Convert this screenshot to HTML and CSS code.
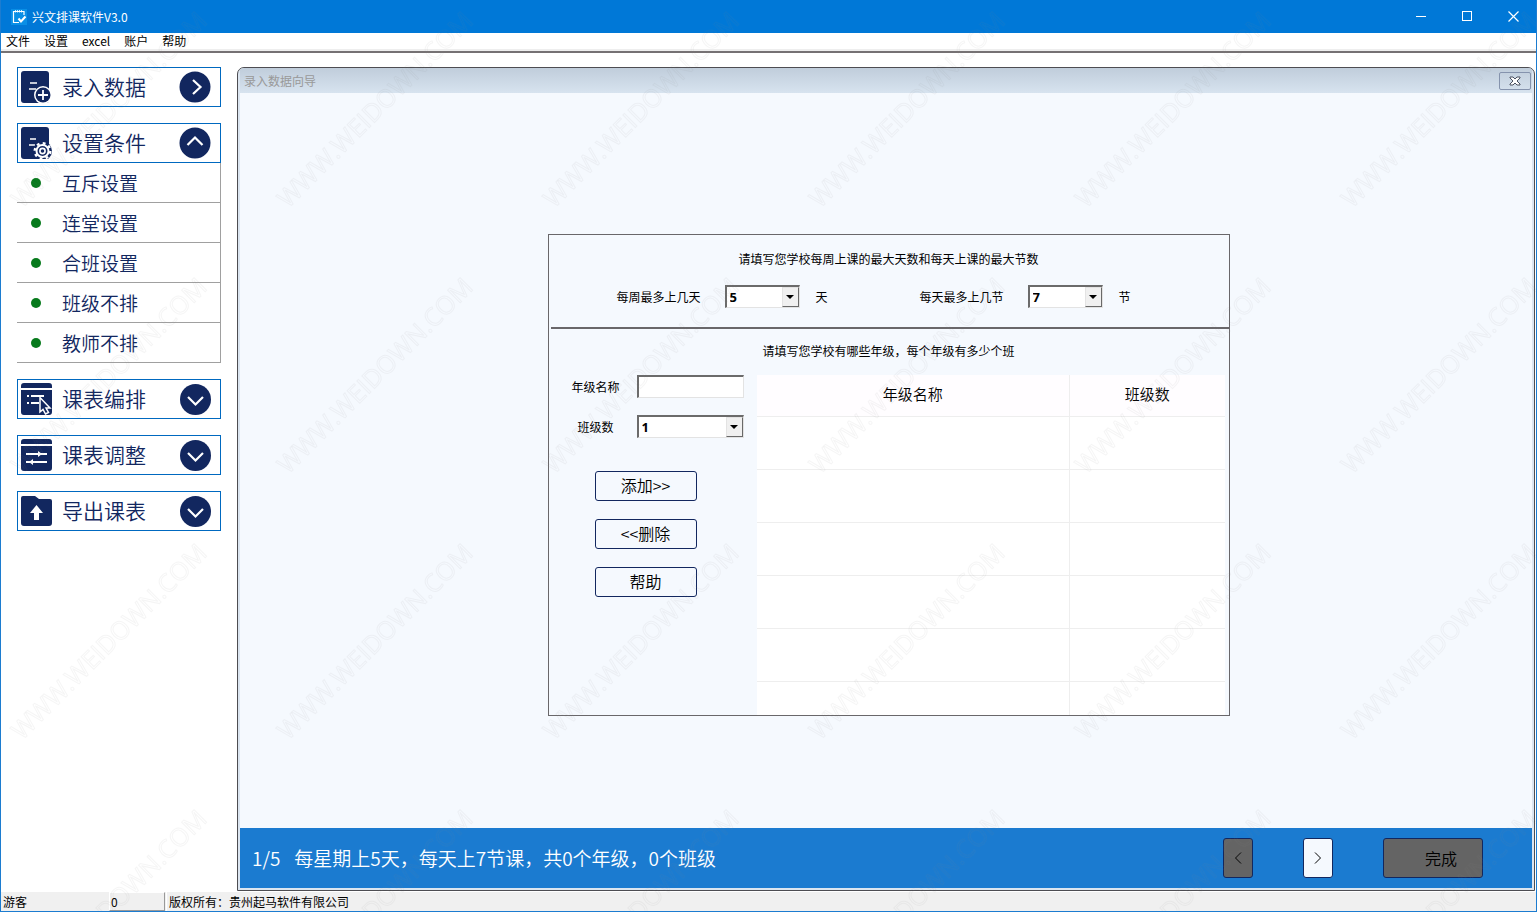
FILE: index.html
```html
<!DOCTYPE html>
<html lang="zh-CN">
<head>
<meta charset="utf-8">
<title>兴文排课软件V3.0</title>
<link rel="stylesheet" href="styles.css">
</head>
<body>
<div class="window">
  <header class="titlebar">
    <svg class="app-icon" viewBox="0 0 16 16" width="16" height="16"><rect width="16" height="16" fill="#0a8fe6"/><path d="M13 6V2.500H2.500v11H8" fill="none" stroke="#fff" stroke-width="1.200"/><path d="M4.500 1v2.500M6.500 1v2.500M8.500 1v2.500M10.500 1v2.500" stroke="#fff" stroke-width=".8"/><path d="M7.500 9.500l2.500 3 4.500-5" fill="none" stroke="#fff" stroke-width="2"/></svg>
    <span class="app-title">兴文排课软件V3.0</span>
    <div class="caption-buttons">
      <button type="button" aria-label="最小化"><svg width="11" height="11"><path d="M0 5.500h10" stroke="#fff"/></svg></button>
      <button type="button" aria-label="最大化"><svg width="11" height="11"><rect x=".5" y=".5" width="9" height="9" fill="none" stroke="#fff"/></svg></button>
      <button type="button" aria-label="关闭"><svg width="11" height="11"><path d="M.5.5l10 10M10.500.5l-10 10" stroke="#fff" stroke-width="1.200"/></svg></button>
    </div>
  </header>
  <nav class="menubar">
    <button type="button">文件</button>
    <button type="button">设置</button>
    <button type="button">excel</button>
    <button type="button">账户</button>
    <button type="button">帮助</button>
  </nav>
  <div class="workspace">
    <aside class="sidebar">
      <button type="button" class="group">
        <svg width="32" height="32" viewBox="0 0 32 32"><rect x="1" width="28" height="32" rx="3" fill="#12275f"/><path d="M10 12h7M9 18h7" stroke="#fff" stroke-width="1.600"/><circle cx="23" cy="24" r="9" fill="#fff"/><circle cx="23" cy="24" r="7.500" fill="#12275f"/><path d="M18 24h10M23 19v10" stroke="#fff" stroke-width="1.800"/></svg>
        <span>录入数据</span>
        <svg class="chevron" width="32" height="32" viewBox="0 0 32 32"><circle cx="16" cy="16" r="15.500" fill="#12275f"/><path d="M14 9l7.500 7-7.500 7" fill="none" stroke="#fff" stroke-width="2.200"/></svg>
      </button>
      <div class="group-block">
        <button type="button" class="group">
          <svg width="32" height="32" viewBox="0 0 32 32"><rect x="1" width="28" height="32" rx="3" fill="#12275f"/><path d="M10 12h6M9 18h6" stroke="#fff" stroke-width="1.600"/><circle cx="22.500" cy="24" r="9.500" fill="#12275f"/><circle cx="22.500" cy="24" r="6" fill="none" stroke="#fff" stroke-width="2"/><circle cx="22.500" cy="24" r="7.800" fill="none" stroke="#fff" stroke-width="2.400" stroke-dasharray="2.800 3.326"/><circle cx="22.500" cy="24" r="2.600" fill="none" stroke="#fff" stroke-width="1.600"/></svg>
          <span>设置条件</span>
          <svg class="chevron" width="32" height="32" viewBox="0 0 32 32"><circle cx="16" cy="16" r="15.500" fill="#12275f"/><path d="M8.500 18l7.500-7.500 7.500 7.500" fill="none" stroke="#fff" stroke-width="2.200"/></svg>
        </button>
        <ul class="sublist">
          <li><a href="#">互斥设置</a></li>
          <li><a href="#">连堂设置</a></li>
          <li><a href="#">合班设置</a></li>
          <li><a href="#">班级不排</a></li>
          <li><a href="#">教师不排</a></li>
        </ul>
      </div>
      <button type="button" class="group">
        <svg width="32" height="32" viewBox="0 0 32 32"><path d="M1 5V3a3 3 0 0 1 3-3h25a3 3 0 0 1 3 3v2zM1 7h31v22a3 3 0 0 1-3 3H4a3 3 0 0 1-3-3z" fill="#12275f"/><path d="M7 13h2M11 13h13M7 20h2M11 20h8" stroke="#fff" stroke-width="1.800"/><path d="M20 14.500v14.500l3-2.500 2.500 4.500 3-1.500-2.500-4.500h4z" fill="#12275f" stroke="#fff" stroke-width="1.500"/></svg>
        <span>课表编排</span>
        <svg class="chevron" width="32" height="32" viewBox="0 0 32 32"><circle cx="16.500" cy="16.500" r="15.500" fill="#12275f"/><path d="M9 14l7.500 7.500 7.500-7.500" fill="none" stroke="#fff" stroke-width="2.200"/></svg>
      </button>
      <button type="button" class="group">
        <svg width="32" height="32" viewBox="0 0 32 32"><path d="M1 5V3a3 3 0 0 1 3-3h25a3 3 0 0 1 3 3v2zM1 7h31v22a3 3 0 0 1-3 3H4a3 3 0 0 1-3-3z" fill="#12275f"/><path d="M6 15h21M6 23h21" stroke="#fff" stroke-width="1.800"/><path d="M18 12l4 3-4 3zM13 20l-4 3 4 3z" fill="#fff"/></svg>
        <span>课表调整</span>
        <svg class="chevron" width="32" height="32" viewBox="0 0 32 32"><circle cx="16.500" cy="16.500" r="15.500" fill="#12275f"/><path d="M9 14l7.500 7.500 7.500-7.500" fill="none" stroke="#fff" stroke-width="2.200"/></svg>
      </button>
      <button type="button" class="group">
        <svg width="32" height="32" viewBox="0 0 32 32"><path d="M1 3a2 2 0 0 1 2-2h12l4 3h11a2 2 0 0 1 2 2v22a3 3 0 0 1-3 3H4a3 3 0 0 1-3-3z" fill="#12275f"/><path d="M16.500 10l6.500 8h-4v7h-5v-7h-4z" fill="#fff"/></svg>
        <span>导出课表</span>
        <svg class="chevron" width="32" height="32" viewBox="0 0 32 32"><circle cx="16.500" cy="16.500" r="15.500" fill="#12275f"/><path d="M9 14l7.500 7.500 7.500-7.500" fill="none" stroke="#fff" stroke-width="2.200"/></svg>
      </button>
    </aside>
    <main class="wizard">
      <div class="wizard-caption">
        <span>录入数据向导</span>
        <button type="button" class="wizard-close" aria-label="关闭向导"><svg width="12" height="10" viewBox="0 0 12 10"><path d="M1 1h3l2 2 2-2h3v1L8 5l3 3v1H8L6 7 4 9H1V8l3-3-3-3z" fill="#fff" stroke="#4a5160"/></svg></button>
      </div>
      <div class="wizard-body">
        <form class="panel">
          <section class="limits">
            <p class="hint">请填写您学校每周上课的最大天数和每天上课的最大节数</p>
            <div class="limit-row">
              <label for="days">每周最多上几天</label>
              <span class="combo combo-short"><select id="days"><option>4</option><option selected>5</option><option>6</option><option>7</option></select></span>
              <span class="unit">天</span>
              <label for="periods">每天最多上几节</label>
              <span class="combo combo-short"><select id="periods"><option>6</option><option selected>7</option><option>8</option></select></span>
              <span class="unit">节</span>
            </div>
          </section>
          <section class="grades">
            <p class="hint">请填写您学校有哪些年级，每个年级有多少个班</p>
            <div class="grades-columns">
              <div class="editor">
                <div class="field"><label for="grade">年级名称</label><input id="grade" type="text" class="text-box"></div>
                <div class="field"><label for="classes">班级数</label><span class="combo"><select id="classes"><option>1</option><option>2</option><option>3</option></select></span></div>
                <div class="actions">
                  <button type="button">添加&gt;&gt;</button>
                  <button type="button">&lt;&lt;删除</button>
                  <button type="button">帮助</button>
                </div>
              </div>
              <div class="table-box">
                <table class="grade-table">
                  <thead><tr><th>年级名称</th><th>班级数</th></tr></thead>
                  <tbody>
                    <tr><td></td><td></td></tr>
                    <tr><td></td><td></td></tr>
                    <tr><td></td><td></td></tr>
                    <tr><td></td><td></td></tr>
                    <tr><td></td><td></td></tr>
                    <tr class="partial"><td></td><td></td></tr>
                  </tbody>
                </table>
              </div>
            </div>
          </section>
        </form>
      </div>
      <footer class="wizard-bar">
        <p class="summary"><span>1/5</span><span>每星期上5天，每天上7节课，共0个年级，0个班级</span></p>
        <button type="button" class="step off" aria-label="上一步"><svg width="8" height="12"><path d="M7 .5L1.500 6 7 11.500" fill="none" stroke="#000"/></svg></button>
        <button type="button" class="step" aria-label="下一步"><svg width="8" height="12"><path d="M1 .5L6.500 6 1 11.500" fill="none" stroke="#000"/></svg></button>
        <button type="button" class="finish off">完成</button>
      </footer>
    </main>
  </div>
  <footer class="statusbar">
    <span class="cell user">游客</span>
    <span class="cell count">0</span>
    <span class="cell owner">版权所有：贵州起马软件有限公司</span>
  </footer>
  <svg class="watermark" aria-hidden="true">
    <defs>
      <pattern id="mark" x="4" y="0" width="266" height="266" patternUnits="userSpaceOnUse">
        <text class="mark-text" transform="translate(17 209) rotate(-45)">WWW.WEIDOWN.COM</text>
      </pattern>
    </defs>
    <rect width="100%" height="100%" fill="url(#mark)"/>
  </svg>
</div>
</body>
</html>
```
FILE: styles.css
```css
*, *::before, *::after { box-sizing: border-box; }

body {
  margin: 0;
  font-family: "Noto Sans CJK SC", "Noto Sans", sans-serif;
  font-size: 12px;
  line-height: 16px;
  color: #000;
}

button, input, select { font: inherit; color: inherit; }
button { padding: 0; border: 0; background: none; }
p, ul { margin: 0; padding: 0; }
svg { display: block; flex: none; }

.window {
  position: relative;
  display: flex;
  flex-direction: column;
  min-height: 100vh;
  border: 1px solid #1c7cd0;
  border-top: 0;
  background: #fff;
}

.titlebar {
  display: flex;
  align-items: center;
  height: 33px;
  padding-left: 10px;
  background: #0078d7;
  color: #fff;
}
.app-title { margin-left: 5px; }
.caption-buttons { display: flex; margin-left: auto; }
.caption-buttons button {
  display: grid;
  place-items: center;
  width: 46px;
  height: 32px;
}

.menubar {
  display: flex;
  gap: 14px;
  height: 20px;
  padding-left: 5px;
  border-bottom: 2px solid #757173;
  box-shadow: inset 0 -2px #eee;
}
.menubar button { height: 16px; }

.workspace {
  display: flex;
  flex: 1;
  gap: 16px;
  padding: 14px 1px 1px 16px;
}

.sidebar {
  display: flex;
  flex-direction: column;
  flex: none;
  gap: 16px;
  width: 204px;
  color: #12275f;
  font-weight: 350;
}
.group {
  display: flex;
  align-items: center;
  width: 100%;
  height: 40px;
  padding: 0 9px 0 2px;
  border: 1px solid #0069c0;
  background: #fff;
  font-size: 21px;
  line-height: 32px;
}
.group span { margin-left: 10px; padding-bottom: 2px; }
.chevron { margin-left: auto; }
.sublist { list-style: none; border-right: 1px solid #a0a0a0; }
.sublist a {
  display: flex;
  align-items: center;
  height: 40px;
  padding-left: 14px;
  border-bottom: 1px solid #a0a0a0;
  color: inherit;
  font-size: 19px;
  line-height: 28px;
  text-decoration: none;
}
.sublist a::before {
  content: "";
  width: 10px;
  height: 10px;
  margin-right: 21px;
  border-radius: 50%;
  background: #077a1c;
}

.wizard {
  display: flex;
  flex: 1;
  flex-direction: column;
  border: 1px solid #4d4d52;
  border-radius: 7px 7px 0 0;
  padding: 0 2px 2px;
  background: #dbe5f0;
  overflow: hidden;
}
.wizard-caption {
  display: flex;
  align-items: center;
  justify-content: space-between;
  height: 25px;
  padding: 0 1px 0 4px;
  background: linear-gradient(#c0cddb, #d7e3ef);
  color: #999;
}
.wizard-close {
  display: grid;
  place-items: center;
  width: 32px;
  height: 18px;
  border: 1px solid #8593ad;
  border-radius: 2px;
}
.wizard-body {
  flex: 1;
  padding: 141px 0 112px 5px;
  background: #f5f9fe;
}

.panel {
  width: 682px;
  margin: 0 auto;
  border: 1px solid #69676a;
}
.hint { text-align: center; }
.limits {
  margin-left: 2px;
  padding: 16px 0 19px;
  border-bottom: 2px solid #69676a;
}
.limits .hint { padding-right: 2px; }
.limit-row {
  display: flex;
  align-items: center;
  margin-top: 18px;
  padding-left: 66px;
}
.limit-row > * { flex: none; }
.limit-row label { width: 108px; }
.unit { padding-left: 16px; }
.unit + label { margin-left: 92px; }

.combo { position: relative; display: block; width: 107px; }
.combo-short { width: 75px; }
.combo select, .text-box {
  display: block;
  width: 100%;
  height: 23px;
  padding: 0 3px;
  border: 2px solid;
  border-color: #6b6b6b #e3e3e3 #e3e3e3 #6b6b6b;
  border-right-width: 1px;
  border-bottom-width: 1px;
  border-radius: 0;
  background: #fff;
  outline: 0;
}
.combo select { appearance: none; font-family: "Noto Sans", sans-serif; font-size: 13px; font-weight: 700; }
.combo::before {
  content: "";
  position: absolute;
  top: 2px;
  right: 1px;
  width: 17px;
  height: 20px;
  border: 1px solid;
  border-color: #e3e3e3 #696969 #696969 #e3e3e3;
  background: #f0f0f0;
  pointer-events: none;
}
.combo::after {
  content: "";
  position: absolute;
  top: 10px;
  right: 6px;
  border: 4px solid transparent;
  border-top-color: #000;
  border-bottom: 0;
  pointer-events: none;
}

.grades .hint { padding: 14px 0 16px; }
.grades-columns { display: flex; }
.editor { width: 208px; padding-left: 12px; }
.field {
  display: grid;
  grid-template-columns: 70px 107px;
  align-items: center;
  column-gap: 6px;
  margin-bottom: 17px;
}
.field label { text-align: center; }
.actions {
  display: grid;
  gap: 18px;
  width: 102px;
  margin: 33px 0 0 34px;
}
.actions button {
  height: 30px;
  padding-bottom: 2px;
  border: 1px solid #12275f;
  border-radius: 3px;
  font-size: 16px;
  font-weight: 350;
}

.table-box { flex: 1; padding-right: 4px; }
.grade-table {
  width: 100%;
  table-layout: fixed;
  border-collapse: collapse;
  background: #fff;
}
.grade-table th {
  height: 41px;
  padding: 0 0 2px;
  background: #fffdff;
  font-size: 15px;
  font-weight: 350;
}
.grade-table th:first-child { width: 313px; }
.grade-table td { height: 53px; padding: 0; }
.grade-table th, .grade-table td { border-bottom: 1px solid #eee; }
.grade-table tr > :first-child { border-right: 1px solid #eee; }
.grade-table .partial td { height: 34px; border-bottom: 0; }

.wizard-bar {
  display: flex;
  align-items: center;
  height: 60px;
  padding: 0 49px 0 12px;
  background: #1b7bd0;
}
.summary {
  display: flex;
  gap: 14px;
  margin-right: auto;
  color: #fff;
  font-size: 19px;
  font-weight: 350;
  line-height: 28px;
}
.step, .finish {
  height: 40px;
  border: 1px solid #12275f;
  border-radius: 3px;
  background: #f5f9fe;
}
.step {
  display: grid;
  place-items: center;
  width: 30px;
  margin-right: 50px;
}
.finish {
  width: 100px;
  padding-left: 16px;
  font-size: 16px;
  font-weight: 350;
}
.off { background: #646464; }

.statusbar {
  display: flex;
  height: 19px;
  background: #f0f0f0;
  line-height: 19px;
}
.cell { padding-left: 2px; }
.user { width: 108px; }
.count {
  width: 56px;
  padding-left: 1px;
  border: 1px solid #999;
  border-color: #fff #999 #999 #fff;
  line-height: 17px;
}
.owner {
  flex: 1;
  margin-left: 1px;
  border-left: 1px solid #fff;
}

.watermark {
  position: absolute;
  inset: 0;
  width: 100%;
  height: 100%;
  pointer-events: none;
}
.mark-text {
  font-family: "Open Sans", sans-serif;
  font-size: 25px;
  fill: none;
  stroke: #808080;
  stroke-opacity: 0.08;
  stroke-width: 1px;
}
```
